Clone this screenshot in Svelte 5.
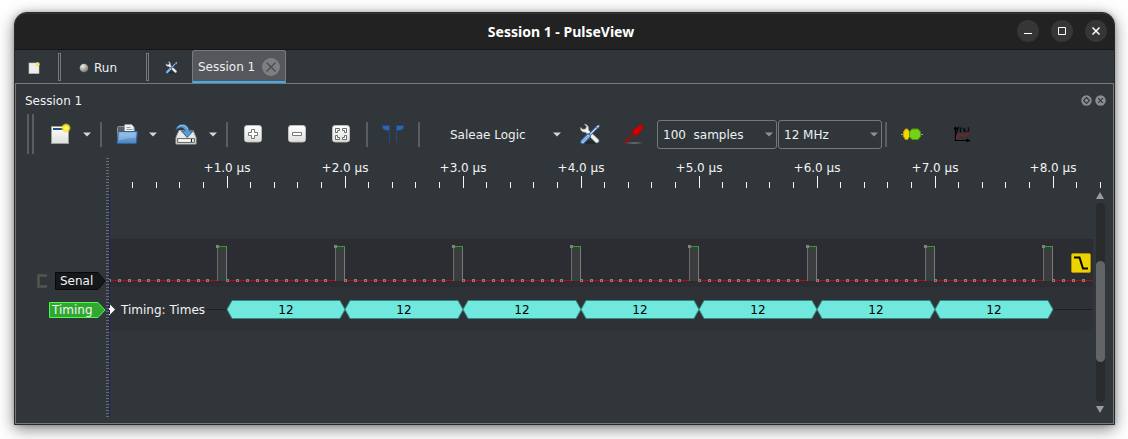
<script>
  const US = 118;
  const SAMPLES_PER_US = 12;
  const STEP = US / SAMPLES_PER_US;
  const LOW = 90;
  const HIGH = 56;

  let rulerWidth = $state(997);
  let plotWidth = $state(984);
  let samples = $state('100');
  let rate = $state('12');

  const periods = [1, 2, 3, 4, 5, 6, 7, 8];
  const words = periods.slice(0, 7).map((n) => ({ x: n * US, value: '12' }));

  let ticks = $derived(
    Array.from({ length: Math.floor(rulerWidth / (US / 5)) }, (_, i) => ({
      x: Math.floor(((i + 1) * US) / 5) + 0.5,
      major: (i + 1) % 5 === 0,
      label: '+' + (i + 1) / 5 + '.0 µs'
    }))
  );
  let dots = $derived(
    Array.from({ length: Math.floor((plotWidth - 4) / STEP) + 1 }, (_, i) => ({
      x: Math.round(i * STEP),
      high: i > 0 && i % SAMPLES_PER_US === SAMPLES_PER_US - 1
    }))
  );
</script>

{#snippet arrow()}
  <svg width="8" height="5" viewBox="0 0 8 5" aria-hidden="true"><path d="M0 .5h8L4 4.5z" fill="#d3d6d8" /></svg>
{/snippet}

{#snippet tools(size)}
  <svg width={size} height={size} viewBox="0 0 22 22" aria-hidden="true">
    <ellipse cx="12" cy="19.5" rx="8" ry="1.6" fill="#1d2023" opacity=".6" />
    <path d="M5.500 1.200 7.500 3.600 6.600 6 3.800 6.300 1.600 4.600C1.200 7.600 3.400 9.600 6.600 9.200L16.600 19.400C18.600 20.800 20.900 18.600 19.400 16.600L9.400 7C10 4 8.600 1.400 5.500 1.200z" fill="#f3f4f2" stroke="#9a9d99" stroke-width=".7" />
    <path d="m10.600 11.800 7-7.200" stroke="#2c5d9c" stroke-width="3" />
    <path d="m10.600 11.800 7-7.200" stroke="#e8eef5" stroke-width="1.200" />
    <path d="m17 3.500 2.600-1.600 1 1-1.600 2.600z" fill="#dfe9f5" stroke="#3465a4" stroke-width=".8" />
    <path d="M3.700 18.700 9.300 13" stroke="#2e62a8" stroke-width="5" stroke-linecap="round" />
    <path d="M3.700 18.700 9.300 13" stroke="#a9c6e8" stroke-width="3" stroke-linecap="round" />
    <path d="M3.900 18.500 9 13.300" stroke="#5f8dc2" stroke-width="1" stroke-linecap="round" />
  </svg>
{/snippet}

<div class="desktop">
  <main class="window">
    <header class="titlebar">
      <h1>Session 1 - PulseView</h1>
      <div class="controls">
        <button aria-label="Minimize"><svg width="12" height="12" viewBox="0 0 12 12"><path d="M2 8.500h8" stroke="#fff" /></svg></button>
        <button aria-label="Maximize"><svg width="12" height="12" viewBox="0 0 12 12"><path d="M2.500 2.500h7v7h-7z" fill="none" stroke="#fff" /></svg></button>
        <button aria-label="Close"><svg width="12" height="12" viewBox="0 0 12 12"><path d="m2.500 2.500 7 7m0-7-7 7" stroke="#fff" stroke-width="1.500" /></svg></button>
      </div>
    </header>

    <nav class="tabbar">
      <button class="new-session" aria-label="New session">
        <svg width="12" height="12" viewBox="0 0 12 12">
          <rect x="1" y="1" width="10" height="10.500" fill="#eeeeec" stroke="#c4c5c2" stroke-width=".6" />
          <circle cx="9.500" cy="2.200" r="2" fill="#f4e668" />
        </svg>
      </button>
      <span class="groove"></span>
      <button class="run">
        <svg width="10" height="10" viewBox="0 0 10 10" aria-hidden="true">
          <defs><radialGradient id="led" cx=".35" cy=".3" r=".7"><stop offset="0" stop-color="#eeeeea" /><stop offset=".6" stop-color="#a9aaa4" /><stop offset="1" stop-color="#777973" /></radialGradient></defs>
          <circle cx="5" cy="5" r="4.300" fill="url(#led)" />
        </svg>
        Run
      </button>
      <span class="groove"></span>
      <button class="settings" aria-label="Settings">{@render tools(13)}</button>
      <div class="tab">
        <button class="tab-label">Session 1</button>
        <button class="tab-close" aria-label="Close session">
          <svg width="18" height="18" viewBox="0 0 18 18"><circle cx="9" cy="9" r="9" fill="#7e7f80" /><path d="m4.500 4.500 9 9m0-9-9 9" stroke="#4d4f51" stroke-width="1.500" /></svg>
        </button>
      </div>
    </nav>

    <section class="dock">
      <div class="dock-title">
        <h2>Session 1</h2>
        <button aria-label="Float">
          <svg width="11" height="11" viewBox="0 0 11 11"><circle cx="5.500" cy="5.500" r="5.200" fill="#8b8d8e" /><path d="M5.500 2.500l3 3-3 3-3-3z" fill="none" stroke="#303438" stroke-width="1.100" /></svg>
        </button>
        <button aria-label="Close dock">
          <svg width="11" height="11" viewBox="0 0 11 11"><circle cx="5.500" cy="5.500" r="5.200" fill="#8b8d8e" /><path d="m3.200 3.200 4.600 4.600m0-4.600-4.600 4.600" stroke="#303438" stroke-width="1.100" /></svg>
        </button>
      </div>

      <div class="toolbar">
        <span class="handle"></span>
        <button class="wide" aria-label="New view">
          <svg width="22" height="22" viewBox="0 0 22 22">
            <defs>
              <radialGradient id="glow"><stop offset="0" stop-color="#fffde0" /><stop offset=".35" stop-color="#fff44c" /><stop offset=".7" stop-color="#f2e516" stop-opacity=".85" /><stop offset="1" stop-color="#f2e516" stop-opacity="0" /></radialGradient>
              <linearGradient id="paper" x2="0" y2="1"><stop offset="0" stop-color="#fff" /><stop offset="1" stop-color="#dededc" /></linearGradient>
            </defs>
            <rect x="2.500" y="3.500" width="17" height="17" fill="url(#paper)" stroke="#9b9d99" />
            <path d="M4 5h14v2H4z" fill="#274f88" />
            <circle cx="17" cy="5" r="5" fill="url(#glow)" />
          </svg>
        </button>
        <button class="drop" aria-label="View menu">{@render arrow()}</button>
        <span class="sep"></span>
        <button aria-label="Open">
          <svg width="22" height="22" viewBox="0 0 22 22">
            <defs><linearGradient id="folder" x2="0" y2="1"><stop offset="0" stop-color="#8ab6e3" /><stop offset="1" stop-color="#4b83c0" /></linearGradient></defs>
            <path d="M1.500 19.500v-15q0-1 1-1H8l1.500 2h8q1 0 1 1v12z" fill="#5c5f5e" stroke="#929491" />
            <path d="M8.500 9V2l1-.500h6l2.500 2.500v6h-9.500z" fill="#f1f2f0" stroke="#9b9e99" />
            <path d="M10.500 4.500h4m-4 2h6" stroke="#999c98" />
            <path d="M3 8.500h17.500q.800 0 .700 1l-.700 10q-.100 1-1 1H2q-1 0-.800-1L2.200 9.500q.100-1 .8-1z" fill="url(#folder)" stroke="#2f62a0" />
            <path d="M3.300 10h16.600l-.400 4.500q-8 .500-16.700 3z" fill="#b5d2ef" opacity=".4" />
          </svg>
        </button>
        <button class="drop mid" aria-label="Open menu">{@render arrow()}</button>
        <button class="wide" aria-label="Save">
          <svg width="22" height="22" viewBox="0 0 22 22">
            <path d="M4 7.500 1 14.500v6.500h20v-6.500l-3-7z" fill="#e8e9e7" stroke="#a9aba7" />
            <path d="M2.500 15.500h17v4h-17z" fill="#d8dad7" stroke="#6e706d" />
            <path d="M4 16.500h11v2H4z" fill="#fafafa" /><path d="M16.500 16v3" stroke="#222" />
            <path d="M1 7C.500.500 13-1.500 14.500 8H18l-5.800 6.500L6.500 8h3.200C9 4 4.500 3.500 1 7z" fill="#5e9ac9" stroke="#235b88" stroke-width=".9" />
            <path d="M3 4Q9.500-.5 12.800 6" fill="none" stroke="#a2c9e5" />
          </svg>
        </button>
        <button class="drop" aria-label="Save menu">{@render arrow()}</button>
        <span class="sep"></span>
        <div class="zooms">
          <button aria-label="Zoom in">
            <svg width="20" height="20" viewBox="0 0 20 20">
              <rect x="1.500" y="2" width="17" height="17" rx="3" fill="#1d2022" />
              <rect x="1.500" y="1.500" width="17" height="16.500" rx="2.500" fill="url(#paper)" stroke="#bfc0be" />
              <path d="M8.500 5.500h3v3h3v3h-3v3h-3v-3h-3v-3h3z" fill="#fff" stroke="#777976" />
            </svg>
          </button>
          <button aria-label="Zoom out">
            <svg width="20" height="20" viewBox="0 0 20 20">
              <rect x="1.500" y="2" width="17" height="17" rx="3" fill="#1d2022" />
              <rect x="1.500" y="1.500" width="17" height="16.500" rx="2.500" fill="url(#paper)" stroke="#bfc0be" />
              <path d="M5.500 8.500h9v3h-9z" fill="#fff" stroke="#777976" />
            </svg>
          </button>
          <button aria-label="Zoom to fit">
            <svg width="20" height="20" viewBox="0 0 20 20">
              <rect x="1.500" y="2" width="17" height="17" rx="3" fill="#1d2022" />
              <rect x="1.500" y="1.500" width="17" height="16.500" rx="2.500" fill="url(#paper)" stroke="#bfc0be" />
              <path d="M4.500 4.500h4v2h-2v2h-2zM11.500 4.500h4v4h-2v-2h-2zM4.500 11.500h2v2h2v2h-4zM13.500 11.500h2v4h-4v-2h2z" fill="#fff" stroke="#6b6d6a" />
            </svg>
          </button>
        </div>
        <span class="sep"></span>
        <button aria-label="Show cursors">
          <svg width="22" height="20" viewBox="0 0 22 20">
            <path d="M.500 1.500h7v17M21.500 1.500h-7v17" fill="none" stroke="#204a87" />
            <path d="M.500 1.500h7v5H4L.500 4.500zM21.500 1.500h-7v5H18l3.500-2z" fill="#3166a8" stroke="#204a87" />
          </svg>
        </button>
        <span class="sep"></span>
        <button class="device"><span>Saleae Logic</span>{@render arrow()}</button>
        <div class="zooms">
          <button aria-label="Configure device">{@render tools(22)}</button>
          <button aria-label="Configure channels">
            <svg width="22" height="22" viewBox="0 0 22 22">
              <defs><radialGradient id="shade"><stop offset="0" stop-color="#777" /><stop offset="1" stop-color="#777" stop-opacity="0" /></radialGradient></defs>
              <ellipse cx="11" cy="20" rx="10" ry="1.500" fill="url(#shade)" />
              <path d="M1.500 20 10 11" stroke="#c00000" stroke-width="1.500" />
              <path d="m9.500 9.500 1.200-3.500 2-.5 3.300-3 .7.500 1.800-1.800 2 1.800-1.700 2 .7 1-3 3.500-.5 1.500-3.500 1.500z" fill="#d40000" stroke="#a40000" stroke-width=".8" />
            </svg>
          </button>
        </div>
        <div class="combos">
          <label class="combo count">
            <select aria-label="Sample count" bind:value={samples}>
              <option value="100">100&nbsp;&nbsp;samples</option>
              <option value="1k">1&nbsp;k samples</option>
            </select>
            <svg width="8" height="5" viewBox="0 0 8 5" aria-hidden="true"><path d="M0 .5h8L4 4.500z" fill="#8e9193" /></svg>
          </label>
          <label class="combo rate">
            <select aria-label="Sample rate" bind:value={rate}>
              <option value="12">12 MHz</option>
              <option value="24">24 MHz</option>
            </select>
            <svg width="8" height="5" viewBox="0 0 8 5" aria-hidden="true"><path d="M0 .5h8L4 4.500z" fill="#8e9193" /></svg>
          </label>
        </div>
        <span class="sep last"></span>
        <button aria-label="Add protocol decoder">
          <svg width="22" height="14" viewBox="0 0 22 14">
            <path d="M0 7.500h22" stroke="#9b9d9e" />
            <path d="M4.500 2h2l2 3v4.500l-2 3h-2l-2-3V5z" fill="#f2d800" stroke="#c4a000" />
            <path d="M11 2h6l2.500 3v4.500l-2.500 3h-6l-2.500-3V5z" fill="#73d216" stroke="#4e9a06" />
          </svg>
        </button>
        <button class="math" aria-label="Add math signal">
          <svg width="18" height="18" viewBox="0 0 18 18">
            <path d="M2.500 16V3M1.500 15.500H14" stroke="#000" stroke-width="1.200" fill="none" />
            <path d="M.500 4.500 2.500 1l2 3.500zM13.500 13.500 17.500 15.500l-4 2z" fill="#000" />
            <path d="M3 14.500C5 10 7 8 9 10S13.500 13 16 3" fill="none" stroke="#a81818" stroke-width="1.100" />
            <text x="3" y="7" class="fx">f(x)</text>
          </svg>
        </button>
      </div>

      <div class="traces">
        <div class="labels">
          <div class="signal">
            <svg class="grip" width="10" height="14" viewBox="0 0 10 14" aria-hidden="true"><path d="M10 1.500H1.500v11H10" fill="none" stroke="#55564f" stroke-width="2.500" /></svg>
            <button aria-label="Senal">
              <svg width="51" height="18" viewBox="0 0 51 18">
                <path d="M.500.500H43L50 9l-7 8.500H.500z" fill="#15181a" stroke="#08090a" />
                <text x="5" y="13">Senal</text>
              </svg>
            </button>
          </div>
          <button aria-label="Timing">
            <svg width="57" height="16" viewBox="0 0 57 16">
              <path d="M.500.500H49L56 8l-7 7.500H.500z" fill="#2fa82f" stroke="#4dfb4d" />
              <text x="3" y="12">Timing</text>
            </svg>
          </button>
        </div>
        <div class="splitter"></div>
        <div class="view">
          <div class="ruler" bind:clientWidth={rulerWidth}>
            <svg width="100%" height="32">
              {#each ticks as t}
                <path d="M{t.x} {t.major ? 18 : 24}V30" stroke="#f4f5f5" />
                {#if t.major}<text x={t.x - 0.5} y="14" text-anchor="middle">{t.label}</text>{/if}
              {/each}
            </svg>
          </div>
          <div class="plot-row">
            <div class="plot" bind:clientWidth={plotWidth}>
              <svg width="100%" height="230">
                <rect y="49" width="100%" height="48" fill="#2c2d32" />
                <rect y="97" width="100%" height="44" fill="#2e3236" />
                <path d="M0 {LOW + 0.5}H{plotWidth}" stroke="#c00808" />
                {#each periods as n}
                  <rect x={n * US - 10} y={HIGH} width="10" height="35" fill="#3a3c3e" />
                  <path d="M{n * US - 9.5} {HIGH}V{LOW + 1}" stroke="#6a6c6e" />
                  <path d="M{n * US - 0.5} {HIGH}V{LOW}" stroke="#77797a" />
                  <path d="M{n * US - 9} {HIGH + 0.5}H{n * US}" stroke="#10b510" />
                {/each}
                {#each dots as d}
                  <rect x={d.x - 1} y={(d.high ? HIGH : LOW) - 1} width="3" height="3" fill="#808080" />
                  {#if !d.high}<rect x={d.x} y={LOW} width="1" height="1" fill="#b31f1f" />{/if}
                {/each}
                <path d="M98 119.500H{plotWidth}" stroke="#1d2022" />
                <path d="M0 113.500 6 119.500 0 125.500z" fill="#fff" />
                <text x="12" y="124">Timing: Times</text>
                {#each words as w}
                  <path d="M{w.x + 5} 110.500H{w.x + US - 5}L{w.x + US} 119.500L{w.x + US - 5} 128.500H{w.x + 5}L{w.x} 119.500z" fill="#70e8dd" stroke="#358780" />
                  <text class="word" x={w.x + US / 2} y="124" text-anchor="middle">{w.value}</text>
                {/each}
              </svg>
              <button class="trigger" aria-label="Falling edge trigger">
                <svg width="20" height="20" viewBox="0 0 20 20">
                  <rect x=".5" y=".5" width="19" height="19" rx="1.500" fill="#edd400" stroke="#a99600" />
                  <path d="M3 4.500h5.500L12 15.500h5" fill="none" stroke="#000" stroke-width="2" />
                </svg>
              </button>
            </div>
            <div class="scrollbar">
              <svg width="8" height="7" viewBox="0 0 8 7" aria-hidden="true"><path d="M4 0 8 7H0z" fill="#9a9c9d" /></svg>
              <div class="track"><div class="thumb"></div></div>
              <svg width="8" height="7" viewBox="0 0 8 7" aria-hidden="true"><path d="M0 0h8L4 7z" fill="#9a9c9d" /></svg>
            </div>
          </div>
        </div>
      </div>
    </section>
  </main>
</div>

<style>
  :global(body) { margin: 0; background: #fff; }
  .desktop {
    box-sizing: border-box;
    display: flex;
    min-height: 100vh;
    padding: 12px 13px 14px 14px;
    overflow: hidden;
    font: 12px/16px "DejaVu Sans", sans-serif;
    color: #eff0f1;
  }
  h1, h2 { margin: 0; font: inherit; }
  svg { display: block; flex: none; }
  svg text { fill: #f2f3f3; font-size: 12px; }
  svg text.word { fill: #000; }
  svg text.fx { fill: #000; font: italic bold 7px "DejaVu Serif", serif; }
  button {
    display: flex;
    align-items: center;
    justify-content: center;
    flex: none;
    padding: 0;
    border: 0;
    background: none;
    color: inherit;
    font: inherit;
  }
  .window {
    display: flex;
    flex: 1;
    flex-direction: column;
    min-width: 0;
    border: 1px solid #2a2a2b;
    border-radius: 13px 13px 0 0;
    background: #31363b;
    box-shadow: 0 4px 16px rgba(0, 0, 0, 0.5), 0 0 4px rgba(0, 0, 0, 0.2);
  }
  .titlebar {
    box-sizing: border-box;
    display: grid;
    grid-template-columns: 1fr auto 1fr;
    align-items: center;
    height: 37px;
    padding-right: 7px;
    border-bottom: 1px solid #151617;
    border-radius: 12px 12px 0 0;
    background: #222;
    box-shadow: inset 0 1px #333;
  }
  .titlebar h1 { grid-column: 2; padding-top: 2px; font: bold 14px/20px "Noto Sans", "Open Sans", sans-serif; color: #fff; }
  .controls { display: flex; justify-content: flex-end; gap: 12px; }
  .controls button { width: 22px; height: 22px; border-radius: 50%; background: #363636; }
  .tabbar { display: flex; align-items: center; height: 33px; }
  .tabbar button { padding-top: 2px; }
  .new-session { width: 38px; margin-right: 5px; }
  .groove { box-sizing: border-box; width: 3px; height: 28px; border: 1px solid #77797b; }
  .run { justify-content: flex-start; gap: 5px; width: 66px; margin: 0 1px 0 18px; }
  .settings { width: 44px; }
  .tab {
    box-sizing: border-box;
    display: flex;
    align-items: center;
    gap: 7px;
    height: 33px;
    margin-left: -1px;
    padding: 0 5px;
    border: 1px solid #797b7d;
    border-bottom: 2px solid #3daee9;
    border-radius: 3px 3px 0 0;
    background: #54575b;
  }
  .dock {
    display: flex;
    flex: 1;
    flex-direction: column;
    border: 1px solid #76797c;
  }
  .dock-title { display: flex; align-items: center; gap: 3px; height: 32px; padding: 0 7px 0 9px; }
  .dock-title h2 { flex: 1; padding-top: 2px; }
  .toolbar { display: flex; align-items: center; height: 36px; padding-left: 11px; }
  .toolbar button { width: 30px; }
  .handle { box-sizing: border-box; width: 7px; height: 40px; margin-right: 4px; border: solid #5b5d5f; border-width: 0 2px; }
  .toolbar .wide { width: 44px; }
  .toolbar .drop { width: 9px; }
  .toolbar .mid { width: 22px; }
  .sep { width: 2px; height: 25px; margin: 0 10px 0 9px; background: #5b5d5f; }
  .zooms { display: flex; gap: 14px; }
  .zooms + .sep, button:not(.drop) + .sep { margin-left: 10px; }
  .toolbar .device { justify-content: space-between; width: 131px; margin-right: 14px; padding-left: 20px; box-sizing: border-box; }
  .device span { padding-top: 2px; }
  .combos { display: flex; gap: 1px; margin-left: 8px; }
  .combo { position: relative; display: block; }
  .combo select {
    box-sizing: border-box;
    width: 100%;
    height: 29px;
    padding: 2px 5px 0;
    border: 1px solid #76797c;
    border-radius: 3px;
    appearance: none;
    background: #31363b;
    color: inherit;
    font: inherit;
  }
  .combo svg { position: absolute; right: 4px; top: 12px; pointer-events: none; }
  .count { width: 120px; }
  .rate { width: 104px; }
  .sep.last { margin-left: 3px; }
  .toolbar .math { margin-left: 20px; }
  .traces { display: flex; flex: 1; padding-top: 6px; }
  .labels {
    box-sizing: border-box;
    display: flex;
    flex-direction: column;
    align-items: flex-end;
    gap: 12px;
    width: 90px;
    padding-top: 114px;
  }
  .signal { display: flex; align-items: center; gap: 8px; }
  .splitter {
    width: 3px;
    margin-bottom: 5px;
    background: repeating-linear-gradient(#6c6e70 0 1px, transparent 1px 3px);
  }
  .view { display: flex; flex: 1; flex-direction: column; min-width: 0; }
  .ruler { margin-right: 7px; }
  .plot-row { display: flex; flex: 1; }
  .plot {
    position: relative;
    flex: 1;
    min-width: 0;
    height: 228px;
    overflow: hidden;
  }
  .plot::after {
    content: "";
    position: absolute;
    inset: 0 auto 0 0;
    width: 1px;
    background: repeating-linear-gradient(#18187c 0 4px, transparent 4px 6px);
  }
  .trigger { position: absolute; right: 2px; top: 63px; }
  .scrollbar { box-sizing: border-box; display: flex; flex-direction: column; align-items: center; width: 20px; padding: 2px 6px 10px 0; }
  .track { flex: 1; width: 9px; margin: 4px 0; border-radius: 5px; background: #292a2b; }
  .thumb { height: 101px; margin-top: 58px; border-radius: 5px; background: #636465; }
</style>
